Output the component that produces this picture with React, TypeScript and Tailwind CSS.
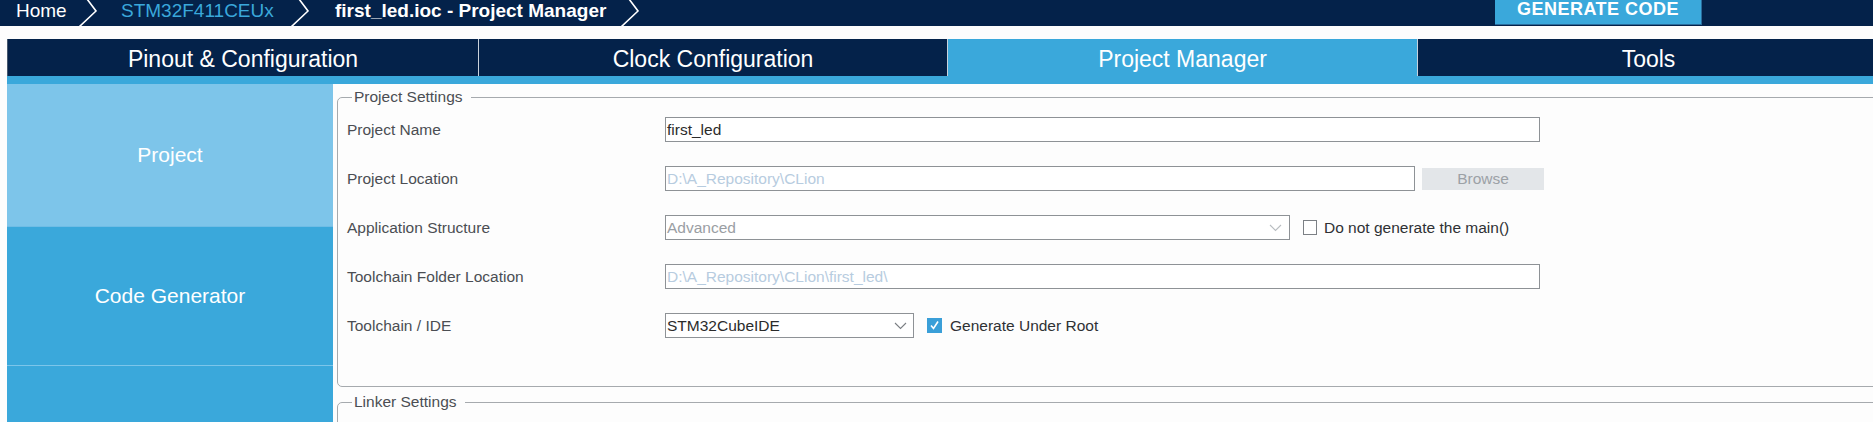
import React from "react";

const Chevron = ({ w = 22 }: { w?: number }) => (
  <svg width={w} height="26" viewBox={`0 0 ${w} 26`} className="shrink-0">
    <polyline points="9,-1 18,11 1,27" fill="none" stroke="#ffffff" strokeWidth="1.6" />
  </svg>
);

const SelectChevron = ({ color }: { color: string }) => (
  <svg width="13" height="8" viewBox="0 0 13 8" className="shrink-0">
    <polyline points="1,1 6.5,6.5 12,1" fill="none" stroke={color} strokeWidth="1.1" />
  </svg>
);

const Row = ({ label, children }: { label: string; children: React.ReactNode }) => (
  <div className="flex items-center h-[25px]">
    <div className="w-[318px] shrink-0 pt-[1px] text-[15.5px] text-[#4b4e53] whitespace-nowrap">{label}</div>
    {children}
  </div>
);

export default function App() {
  return (
    <div className="w-[1873px] h-[422px] overflow-hidden bg-[#fdfdfd] font-['Liberation_Sans',Arial,sans-serif]">
      {/* Header */}
      <div className="h-[26px] bg-[#04224a] flex items-start text-[19px] leading-[21px] whitespace-nowrap">
        <span className="ml-[16px] w-[62px] shrink-0 text-white">Home</span>
        <Chevron w={20} />
        <span className="pl-[23px] w-[192px] shrink-0 text-[#3aa8db]">STM32F411CEUx</span>
        <Chevron />
        <span className="pl-[23px] w-[308px] shrink-0 font-bold text-white">first_led.ioc - Project Manager</span>
        <Chevron />
        <div className="ml-auto mr-[171px] w-[207px] h-[25px] shrink-0 bg-[#3aa8db] border-r border-b border-[#2a6c9c] flex justify-center">
          <span className="text-white font-bold text-[18px] leading-[19px] tracking-[0.5px]">GENERATE CODE</span>
        </div>
      </div>

      <div className="ml-[7px] mt-[13px]">
        {/* Tabs */}
        <div className="flex h-[37px] bg-[#04224a] text-white text-[23px] whitespace-nowrap border-l border-[#46586e]">
          <div className="w-[470px] shrink-0 flex items-center justify-center pt-[3px]">Pinout &amp; Configuration</div>
          <div className="w-[469px] shrink-0 flex items-center justify-center pt-[3px] border-l border-[#c9d2dc]">Clock Configuration</div>
          <div className="w-[470px] shrink-0 flex items-center justify-center pt-[3px] border-l border-[#c9d2dc] bg-[#3aa8db]">Project Manager</div>
          <div className="flex-1 flex items-center justify-center pt-[3px] pl-[6px] border-l border-[#c9d2dc]">Tools</div>
        </div>
        <div className="h-[8px] bg-[#3aa8db]" />

        <div className="flex">
          {/* Sidebar */}
          <div className="w-[326px] shrink-0 flex flex-col text-white text-[21px]">
            <div className="h-[142px] bg-[#7dc5ea] flex items-center justify-center">Project</div>
            <div className="h-[139px] bg-[#3aa8db] border-t border-[#6fbde6] flex items-center justify-center">Code Generator</div>
            <div className="h-[80px] bg-[#3aa8db] border-t border-[#7cc5ea]" />
          </div>

          {/* Content */}
          <div className="flex-1 pl-[4px] pt-[4px]">
            <fieldset className="w-[1580px] border border-[#a6aaae] rounded-[5px] pl-[9px] pt-[11px] pb-[48px]">
              <legend className="ml-[5px] pl-[2px] pr-[8px] text-[15.5px] leading-[18px] text-[#4b4e53]">Project Settings</legend>
              <div className="flex flex-col gap-[24px]">
                <Row label="Project Name">
                  <div className="w-[875px] h-[25px] border border-[#8e9296] bg-white pl-[1px] flex items-center text-[15.5px] text-[#2b2b2b]">first_led</div>
                </Row>
                <Row label="Project Location">
                  <div className="w-[750px] h-[25px] border border-[#8e9296] bg-white pl-[1px] flex items-center text-[15.5px] text-[#b7cce0]">D:\A_Repository\CLion</div>
                  <div className="ml-[7px] mt-[1px] w-[122px] h-[22px] bg-[#e3e6e9] flex items-center justify-center text-[15.5px] text-[#9ca1a6]">Browse</div>
                </Row>
                <Row label="Application Structure">
                  <div className="w-[625px] h-[25px] border border-[#8e9296] bg-white pl-[1px] pr-[7px] flex items-center justify-between text-[15.5px] text-[#9a9ea3]">
                    <span>Advanced</span>
                    <SelectChevron color="#b9bdc1" />
                  </div>
                  <div className="ml-[13px] w-[14px] h-[15px] border border-[#7c8085] bg-white shrink-0" />
                  <span className="ml-[7px] text-[15.5px] text-[#2f3134] whitespace-nowrap">Do not generate the main()</span>
                </Row>
                <Row label="Toolchain Folder Location">
                  <div className="w-[875px] h-[25px] border border-[#8e9296] bg-white pl-[1px] flex items-center text-[15.5px] text-[#b7cce0]">D:\A_Repository\CLion\first_led\</div>
                </Row>
                <Row label="Toolchain / IDE">
                  <div className="w-[249px] h-[25px] border border-[#8e9296] bg-white pl-[1px] pr-[6px] flex items-center justify-between text-[15.5px] text-[#2b2b2b]">
                    <span>STM32CubeIDE</span>
                    <SelectChevron color="#7a7e83" />
                  </div>
                  <div className="ml-[13px] w-[15px] h-[15px] bg-[#3a9fd8] shrink-0 flex items-center justify-center">
                    <svg width="11" height="11" viewBox="0 0 11 11">
                      <polyline points="2,5.5 4.5,8.5 9,1.5" fill="none" stroke="#ffffff" strokeWidth="1.6" />
                    </svg>
                  </div>
                  <span className="ml-[8px] text-[15.5px] text-[#2f3134] whitespace-nowrap">Generate Under Root</span>
                </Row>
              </div>
            </fieldset>

            <fieldset className="mt-[6px] w-[1580px] border border-[#a6aaae] rounded-[5px] pl-[9px] pt-[11px] pb-[20px]">
              <legend className="ml-[5px] pl-[2px] pr-[8px] text-[15.5px] leading-[18px] text-[#4b4e53]">Linker Settings</legend>
              <div className="flex items-center h-[25px]">
                <div className="w-[318px] shrink-0" />
                <div className="w-[249px] h-[25px] border border-[#8e9296] bg-white" />
              </div>
            </fieldset>
          </div>
        </div>
      </div>
    </div>
  );
}
